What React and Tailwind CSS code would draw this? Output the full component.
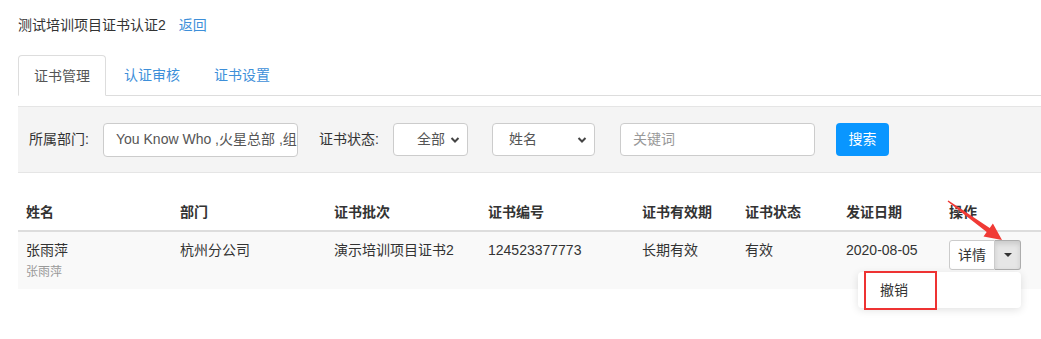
import React from 'react';

const font = { fontFamily: '"Liberation Sans", "Noto Sans CJK SC", sans-serif' };

function Chevron() {
  return (
    <svg width="10" height="8" viewBox="0 0 10 8" className="shrink-0">
      <path d="M1.5 2 L5 5.5 L8.5 2" fill="none" stroke="#444" strokeWidth="2" />
    </svg>
  );
}

function FakeSelect({ label, width, textPad }) {
  return (
    <div className={`flex items-center justify-between h-[33px] bg-white border border-[#ccc] rounded-[4px] pr-[7px] ${width} ${textPad}`}>
      <span className="text-[14px] text-[#555]">{label}</span>
      <Chevron />
    </div>
  );
}

export default function App() {
  const cols = [
    { key: 'name', title: '姓名', w: 'w-[154px]' },
    { key: 'dept', title: '部门', w: 'w-[154px]' },
    { key: 'batch', title: '证书批次', w: 'w-[154px]' },
    { key: 'no', title: '证书编号', w: 'w-[154px]' },
    { key: 'valid', title: '证书有效期', w: 'w-[103px]' },
    { key: 'status', title: '证书状态', w: 'w-[101px]' },
    { key: 'date', title: '发证日期', w: 'w-[103px]' },
    { key: 'op', title: '操作', w: 'w-[100px]' },
  ];

  return (
    <div style={font} className="relative w-[1041px] h-[339px] overflow-hidden bg-white text-[#333] text-[14px]">
      <div className="pl-[18px] pt-[15px]">
        {/* title */}
        <div className="h-[20px] leading-[20px] flex items-center">
          <span>测试培训项目证书认证2</span>
          <span className="ml-[13px] text-[#3d8fd9]">返回</span>
        </div>

        {/* tabs */}
        <div className="mt-[20px] flex border-b border-[#ddd] w-[1023px]">
          <div className="h-[41px] px-[15px] leading-[40px] border border-[#ddd] border-b-white rounded-t-[4px] -mb-px bg-white text-[#555]">证书管理</div>
          <div className="h-[40px] px-[18px] leading-[40px] text-[#3d8fd9]">认证审核</div>
          <div className="h-[40px] px-[16px] leading-[40px] text-[#3d8fd9]">证书设置</div>
        </div>

        {/* filter panel */}
        <div className="mt-[10px] w-[1023px] h-[67px] bg-[#f4f4f4] border-y border-[#e5e5e5] flex items-center pl-[11px]">
          <span className="w-[74px] text-[#333]">所属部门:</span>
          <div className="w-[195px] h-[34px] bg-white border border-[#ccc] rounded-[4px] pl-[12px] flex items-center overflow-hidden whitespace-nowrap text-[#555]">
            You Know Who ,火星总部 ,组织
          </div>
          <span className="ml-[21px] w-[74px] text-[#333]">证书状态:</span>
          <FakeSelect label="全部" width="w-[75px]" textPad="pl-[23px]" />
          <div className="ml-[24px]">
            <FakeSelect label="姓名" width="w-[103px]" textPad="pl-[16px]" />
          </div>
          <div className="ml-[25px] w-[195px] h-[33px] bg-white border border-[#ccc] rounded-[4px] pl-[12px] flex items-center text-[#999]">
            关键词
          </div>
          <div className="ml-[21px] w-[53px] h-[33px] rounded-[4px] bg-[#0996ff] text-white flex items-center justify-center">
            搜索
          </div>
        </div>

        {/* table */}
        <table className="mt-[21px] table-fixed w-[1023px] border-collapse">
          <thead>
            <tr className="border-b-2 border-[#ddd]">
              {cols.map((c) => (
                <th key={c.key} className={`${c.w} text-left font-bold px-[8px] py-[8px] leading-[20px] text-[#333]`}>{c.title}</th>
              ))}
            </tr>
          </thead>
          <tbody>
            <tr className="bg-[#f9f9f9] align-top">
              <td className="px-[8px] pt-[8px] pb-[7px] leading-[20px]">
                <div>张雨萍</div>
                <div className="mt-[2px] text-[12px] text-[#999] leading-[20px]">张雨萍</div>
              </td>
              <td className="px-[8px] pt-[8px] leading-[20px]">杭州分公司</td>
              <td className="px-[8px] pt-[8px] leading-[20px] whitespace-nowrap">演示培训项目证书2</td>
              <td className="px-[8px] pt-[8px] leading-[20px]">124523377773</td>
              <td className="px-[8px] pt-[8px] leading-[20px]">长期有效</td>
              <td className="px-[8px] pt-[8px] leading-[20px]">有效</td>
              <td className="px-[8px] pt-[8px] leading-[20px]">2020-08-05</td>
              <td className="px-[8px] pt-[8px]">
                <div className="relative inline-flex">
                  <div className="w-[46px] h-[30px] bg-white border border-[#ccc] rounded-l-[3px] flex items-center justify-center text-[#333]">详情</div>
                  <div className="w-[26px] h-[30px] bg-[#e6e6e6] border border-l-0 border-[#adadad] rounded-r-[3px] flex items-center justify-center shadow-[inset_0_3px_5px_rgba(0,0,0,0.12)]">
                    <span className="w-0 h-0 border-l-[4px] border-r-[4px] border-t-[4px] border-l-transparent border-r-transparent border-t-[#333]"></span>
                  </div>
                  {/* dropdown */}
                  <div className="absolute right-0 top-[32px] w-[163px] h-[36px] bg-white rounded-[4px] shadow-[0_2px_8px_rgba(0,0,0,0.12)] z-10">
                    <div className="pl-[22px] leading-[36px] text-[#333]">撤销</div>
                    <div className="absolute left-[6px] top-[-1px] w-[73px] h-[39px] border-2 border-[#ee3333]"></div>
                  </div>
                </div>
              </td>
            </tr>
          </tbody>
        </table>
      </div>

      {/* red annotation arrow */}
      <svg className="absolute left-[940px] top-[195px] z-20" width="80" height="60" viewBox="0 0 80 60">
        <polygon points="8.4,5.4 49.7,33.1 52.9,28.6 62,45 43.5,41.6 46.7,37.1 7.6,6.6" fill="#f03a35" />
      </svg>
    </div>
  );
}
